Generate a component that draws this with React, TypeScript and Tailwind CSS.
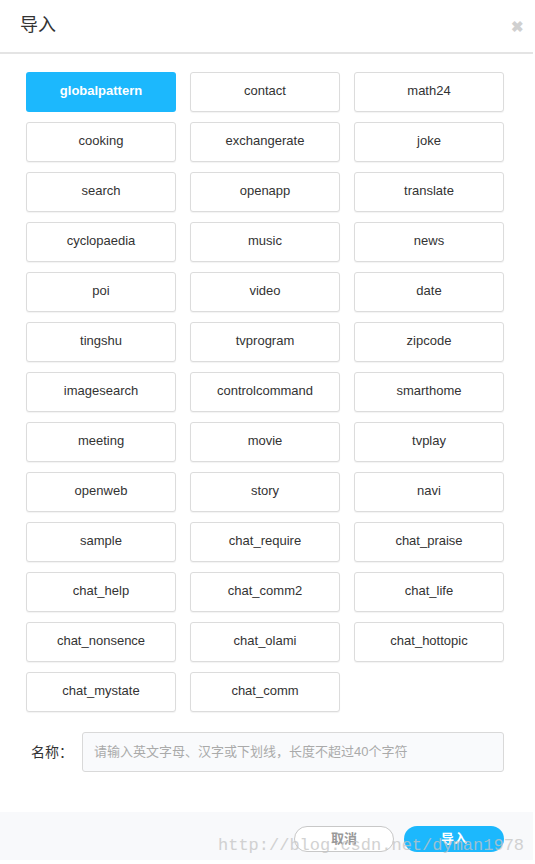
import React from "react";

const items = [
  "globalpattern", "contact", "math24",
  "cooking", "exchangerate", "joke",
  "search", "openapp", "translate",
  "cyclopaedia", "music", "news",
  "poi", "video", "date",
  "tingshu", "tvprogram", "zipcode",
  "imagesearch", "controlcommand", "smarthome",
  "meeting", "movie", "tvplay",
  "openweb", "story", "navi",
  "sample", "chat_require", "chat_praise",
  "chat_help", "chat_comm2", "chat_life",
  "chat_nonsence", "chat_olami", "chat_hottopic",
  "chat_mystate", "chat_comm",
];

const font = { fontFamily: '"Liberation Sans", "Noto Sans CJK SC", Arial, sans-serif' };

export default function App() {
  return (
    <div className="relative w-[535px] h-[864px] bg-white overflow-hidden" style={font}>
      <div className="w-[533px] h-[860px] flex flex-col bg-white">
        {/* header */}
        <div className="h-[54px] border-b-2 border-[#e4e4e4] flex items-center justify-between pl-[20px] pr-[9px] shrink-0">
          <span className="text-[18px] text-[#333] mt-[-1px]">导入</span>
          <span className="text-[#d0d0d0] text-[15px] font-bold leading-none">✖</span>
        </div>

        {/* grid */}
        <div className="pt-[18px] px-[26px] grid grid-cols-[150px_150px_150px] gap-x-[14px] gap-y-[10px]">
          {items.map((it, i) => (
            <div
              key={it}
              className={
                i === 0
                  ? "h-[40px] pb-[2px] rounded-[3px] bg-[#1cb8fd] text-white font-bold text-[13px] flex items-center justify-center"
                  : "h-[40px] pb-[2px] rounded-[3px] border border-[#dcdcdc] bg-white text-[#333] text-[13px] flex items-center justify-center shadow-[0_1px_1px_rgba(0,0,0,0.05)]"
              }
            >
              {it}
            </div>
          ))}
        </div>

        {/* name row */}
        <div className="mt-[20px] flex items-center pl-[31px] pr-[29px]">
          <span className="text-[14px] text-[#333] w-[51px] shrink-0">名称：</span>
          <div className="flex-1 h-[40px] rounded-[3px] border border-[#d9d9d9] bg-[#f9fafc] flex items-center px-[11px]">
            <span className="text-[13px] text-[#aaa]">请输入英文字母、汉字或下划线，长度不超过40个字符</span>
          </div>
        </div>

        <div className="flex-1" />

        {/* footer */}
        <div className="h-[48px] bg-[#f8f9fb] flex items-start justify-end gap-[10px] pt-[14px] pr-[29px]">
          <div className="w-[100px] h-[26px] rounded-full border border-[#c8c8c8] bg-white flex items-center justify-center text-[13px] text-[#999] font-bold">取消</div>
          <div className="w-[100px] h-[26px] rounded-full bg-[#1cb8fd] flex items-center justify-center text-[13px] text-white font-bold">导入</div>
        </div>
      </div>

      {/* watermark */}
      <div
        className="absolute left-[218px] top-[837px] text-[17px] leading-none text-[#c4c4c4] opacity-75 pointer-events-none"
        style={{ fontFamily: '"Liberation Mono", monospace' }}
      >
        http://blog.csdn.net/dyman1978
      </div>
    </div>
  );
}
